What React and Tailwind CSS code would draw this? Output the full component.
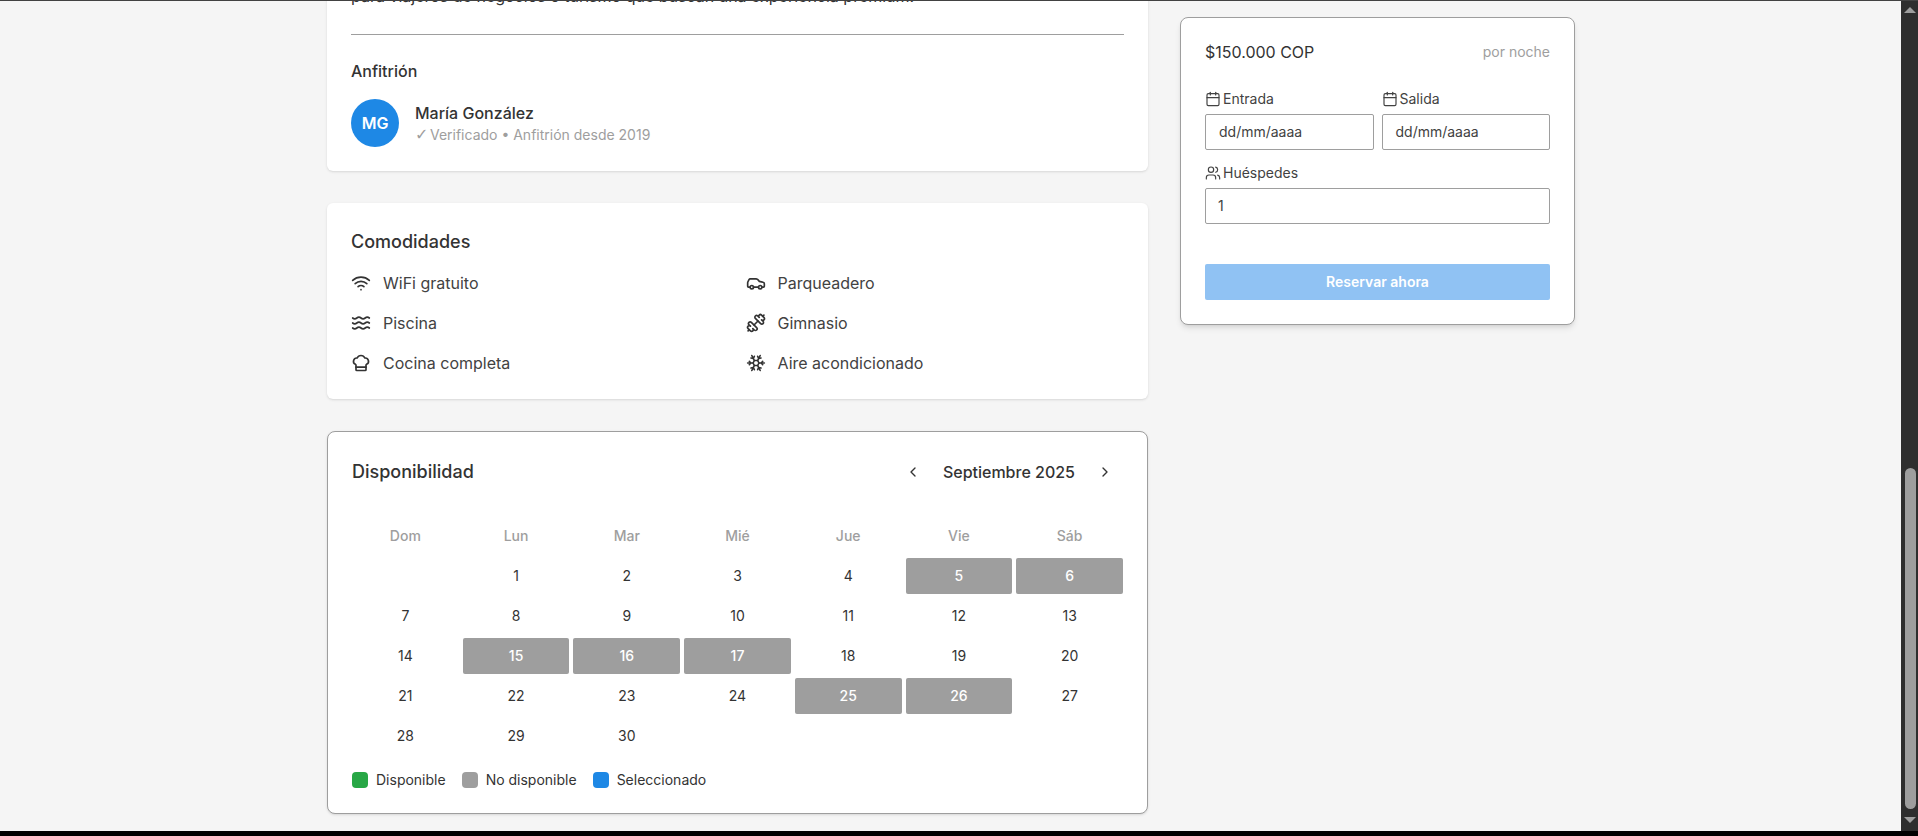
import React from "react";
import {
  Calendar,
  Car,
  ChefHat,
  ChevronLeft,
  ChevronRight,
  Dumbbell,
  Snowflake,
  Users,
  Waves,
  Wifi,
} from "lucide-react";

const amenities = [
  { icon: Wifi, label: "WiFi gratuito" },
  { icon: Car, label: "Parqueadero" },
  { icon: Waves, label: "Piscina" },
  { icon: Dumbbell, label: "Gimnasio" },
  { icon: ChefHat, label: "Cocina completa" },
  { icon: Snowflake, label: "Aire acondicionado" },
];

const weekDays = ["Dom", "Lun", "Mar", "Mié", "Jue", "Vie", "Sáb"];
const blocked = [5, 6, 15, 16, 17, 25, 26];
const days = [null, ...Array.from({ length: 30 }, (_, i) => i + 1)];

const legend = [
  { color: "bg-[#28a745]", label: "Disponible" },
  { color: "bg-[#9e9e9e]", label: "No disponible" },
  { color: "bg-[#1e88e5]", label: "Seleccionado" },
];

const DateField = ({ label }) => (
  <div className="flex-1">
    <div className="mb-[5px] flex h-[21px] items-center gap-[2px] text-sm text-[#424242]">
      <Calendar size={16} strokeWidth={1.75} />
      {label}
    </div>
    <div className="flex h-9 items-center rounded-[2px] border border-[#9e9e9e] px-[13px] text-sm text-[#424242]">
      dd/mm/aaaa
    </div>
  </div>
);

const App = () => {
  return (
    <div className="flex h-[836px] w-[1918px] flex-col overflow-hidden bg-black font-['Inter',sans-serif] text-[#333333]">
      <div className="h-px bg-[#424242]" />
      <div className="flex h-[830px]">
        <div className="flex-1 overflow-hidden bg-[#f5f5f5]">
          <div className="mt-[-15px] ml-[327px] flex w-[1248px] items-start gap-8">
            <div className="flex w-[821px] flex-col gap-8">
              <section className="rounded-md bg-white px-6 pb-6 shadow-sm">
                <p className="-mt-[2px] text-base leading-6 text-[#333333]">
                  para viajeros de negocios o turismo que buscan una experiencia premium.
                </p>
                <div className="mt-[26px] border-t border-[#9e9e9e]" />
                <h3 className="mt-6 text-base leading-6 font-medium">Anfitrión</h3>
                <div className="mt-4 flex items-center gap-4">
                  <div className="flex h-12 w-12 items-center justify-center rounded-full bg-[#1e88e5] text-base font-semibold text-white">
                    MG
                  </div>
                  <div>
                    <div className="text-base leading-6 font-medium">María González</div>
                    <div className="text-sm leading-5 text-[#9e9e9e]">
                      <span className="inline-block w-[11px] font-['DejaVu_Sans',sans-serif] text-base leading-none">✓</span> Verificado • Anfitrión desde 2019
                    </div>
                  </div>
                </div>
              </section>

              <section className="rounded-md bg-white px-6 pt-[25px] pb-6 shadow-sm">
                <h2 className="text-lg leading-[27px] font-medium">Comodidades</h2>
                <div className="mt-4 grid grid-cols-2 gap-x-4 gap-y-4">
                  {amenities.map(({ icon: Icon, label }) => (
                    <div key={label} className="flex h-6 items-center gap-3 text-base text-[#424242]">
                      <Icon size={20} strokeWidth={2} className="text-[#333333]" />
                      {label}
                    </div>
                  ))}
                </div>
              </section>

              <section className="rounded-lg border border-[#9e9e9e] bg-white px-6 pt-6 pb-[23px] shadow-sm">
                <div className="flex items-center justify-between">
                  <h2 className="-mt-[2px] text-lg leading-[27px] font-medium">Disponibilidad</h2>
                  <div className="flex items-center gap-3">
                    <button className="flex h-8 w-9 items-center justify-center">
                      <ChevronLeft size={16} />
                    </button>
                    <span className="text-base font-medium whitespace-nowrap">Septiembre 2025</span>
                    <button className="flex h-8 w-9 items-center justify-center">
                      <ChevronRight size={16} />
                    </button>
                  </div>
                </div>
                <div className="mt-[30px] grid grid-cols-7 gap-1">
                  {weekDays.map((d) => (
                    <div key={d} className="flex h-9 items-center justify-center text-sm font-medium text-[#9e9e9e]">
                      {d}
                    </div>
                  ))}
                  {days.map((d, i) => (
                    <div
                      key={i}
                      className={`flex h-9 items-center justify-center rounded-[2px] text-sm ${
                        blocked.includes(d) ? "bg-[#9e9e9e] font-medium text-white" : ""
                      }`}
                    >
                      {d}
                    </div>
                  ))}
                </div>
                <div className="mt-4 flex items-center gap-4">
                  {legend.map((item) => (
                    <div key={item.label} className="flex items-center gap-2 text-sm">
                      <span className={`h-4 w-4 rounded-[4px] ${item.color}`} />
                      {item.label}
                    </div>
                  ))}
                </div>
              </section>
            </div>

            <aside className="mt-[31px] w-[395px] rounded-lg border border-[#9e9e9e] bg-white p-6 shadow-md">
              <div className="flex h-5 items-center justify-between">
                <span className="text-base">$150.000 COP</span>
                <span className="text-sm text-[#9e9e9e]">por noche</span>
              </div>
              <div className="mt-[26px] flex gap-2">
                <DateField label="Entrada" />
                <DateField label="Salida" />
              </div>
              <div className="mt-3">
                <div className="mb-[5px] flex h-[21px] items-center gap-[2px] text-sm text-[#424242]">
                  <Users size={16} strokeWidth={1.75} />
                  Huéspedes
                </div>
                <div className="flex h-9 items-center rounded-[2px] border border-[#9e9e9e] px-3 text-sm text-[#424242]">
                  1
                </div>
              </div>
              <button className="mt-10 h-9 w-full rounded-[2px] bg-[#90c2f3] text-sm font-semibold text-white">
                Reservar ahora
              </button>
            </aside>
          </div>
        </div>

        <div className="relative w-[17px] bg-[#2e2e2e]">
          <div className="absolute top-[6px] left-[3px] h-0 w-0 border-x-[6px] border-b-[6px] border-x-transparent border-b-[#9e9e9e]" />
          <div className="absolute top-[467px] left-[4px] h-[341px] w-[11px] rounded-full bg-[#9e9e9e]" />
          <div className="absolute top-[816px] left-[3px] h-0 w-0 border-x-[6px] border-t-[6px] border-x-transparent border-t-[#9e9e9e]" />
        </div>
      </div>
    </div>
  );
};

export default App;
